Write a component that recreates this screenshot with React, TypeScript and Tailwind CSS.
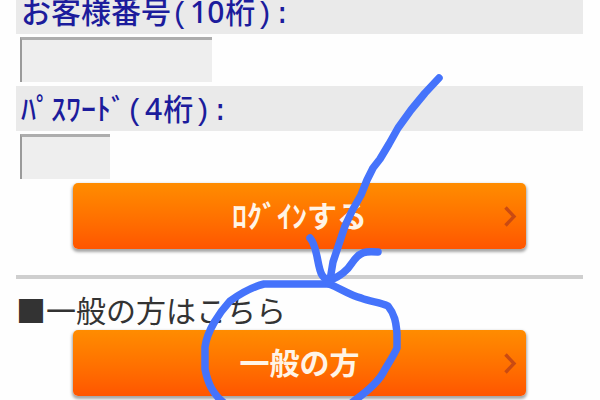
import type { ReactNode } from "react";

function Mono({ children }: { children: ReactNode }) {
  return <span className="font-['Liberation_Mono','Noto_Sans_CJK_JP',monospace]">{children}</span>;
}

function Digits({ children }: { children: ReactNode }) {
  return <span className="px-px font-['Noto_Sans',sans-serif]">{children}</span>;
}

function FieldLabel({ htmlFor, name, digits }: { htmlFor: string; name: string; digits: string }) {
  return (
    <label
      htmlFor={htmlFor}
      className="block h-[45px] bg-[#eaeaea] pl-[5px] text-[30px] leading-[42px] font-medium whitespace-nowrap text-[#1c1c9c]"
    >
      {name}
      <Mono>(</Mono>
      <Digits>{digits}</Digits>桁<Mono>):</Mono>
    </label>
  );
}

const inputClass =
  "block h-[45px] border-0 border-t-3 border-l-2 border-t-[#adadad] border-l-[#9a9a9a] bg-[#eeeeee] px-2 text-[26px] outline-none";

function ActionButton({ children }: { children: ReactNode }) {
  return (
    <button
      type="button"
      className="mx-auto flex h-[66px] w-4/5 items-center rounded-[5px] bg-linear-to-b from-[#ff8c00] to-[#ff5500] px-2 text-[30px] font-bold text-[#fff4e6] shadow-[0_2px_3px_1px_rgba(0,0,0,0.35)]"
    >
      <span className="w-4" />
      <span className="flex-1 pb-1 text-center leading-[42px] whitespace-nowrap">{children}</span>
      <svg className="h-6 w-4" viewBox="0 0 16 24" fill="none" stroke="#c94a12" strokeWidth="3.4" aria-hidden="true">
        <path d="M3.5 3.5 L12 12.5 L3.5 21.5" />
      </svg>
    </button>
  );
}

function PenMarks() {
  return (
    <svg
      className="pointer-events-none absolute top-0 left-0 h-[400px] w-[600px]"
      viewBox="0 0 600 400"
      fill="none"
      stroke="#4573fb"
      strokeWidth="7.5"
      strokeLinecap="round"
      strokeLinejoin="round"
      aria-hidden="true"
    >
      <path d="M439 78 L425 93 L411 110 L398 128 L389 144 L380 159 L373 168 L367 180 L361 195 L352 211 L345 226 L339 244 L333 262 L330 280" />
      <path d="M310 238 C318 247 317 267 322 275 Q325 280 331 280 C338 277 347 271 352 263 C360 251 366 251 378 252" />
      <path d="M329 284 H264 C252 287 240 294 230 301 C219 313 207 331 205 347 V369 C208 384 213 394 224 403" />
      <path d="M329 284 C340 288 349 295 361 298 C371 302 380 302 388 306 C396 316 396 325 397 333 V348 C392 359 387 365 383 373 C376 385 362 395 350 404" />
    </svg>
  );
}

export default function App() {
  return (
    <div className="relative h-screen overflow-hidden bg-[#fefefe] font-['Noto_Sans_CJK_JP',sans-serif]">
      <form className="-mt-[11px] flex flex-col pr-[17px] pl-4" onSubmit={(e) => e.preventDefault()}>
        <FieldLabel htmlFor="customer" name="お客様番号" digits="10" />
        <div className="px-1 pt-[3px] pb-1">
          <input id="customer" type="text" maxLength={10} className={`${inputClass} w-48`} />
        </div>
        <FieldLabel htmlFor="pin" name="ﾊﾟｽﾜｰﾄﾞ" digits="4" />
        <div className="px-1 pt-[3px] pb-1">
          <input id="pin" type="password" maxLength={4} className={`${inputClass} w-[90px]`} />
        </div>
        <ActionButton>ﾛｸﾞｲﾝする</ActionButton>
        <hr className="mt-[26px] border-0 border-t-4 border-[#cfcfcf]" />
        <p className="mt-[9px] h-[42px] text-[30px] leading-[42px] whitespace-nowrap text-[#333333]">■一般の方はこちら</p>
        <ActionButton>一般の方</ActionButton>
      </form>
      <PenMarks />
    </div>
  );
}
